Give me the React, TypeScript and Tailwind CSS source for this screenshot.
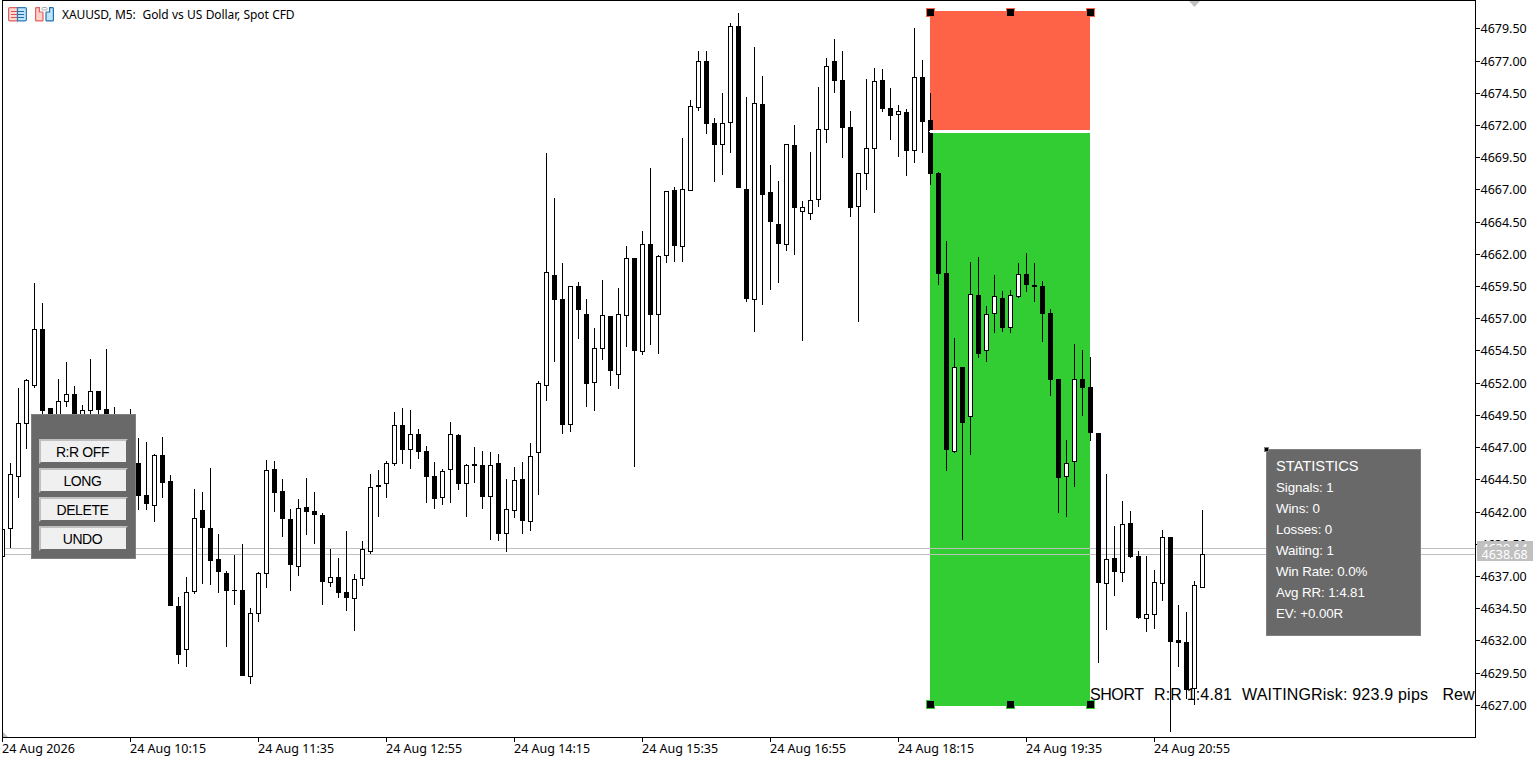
import React from 'react';

type Candle = [x: number, high: number, top: number, bottom: number, low: number, bull: 0 | 1];

// x, high, body top, body bottom, low, bullish
const CANDLES: Candle[] = [
    [2, 529, 529, 556, 556, 1], [10, 463, 474, 528, 547, 1], [18, 388, 423, 476, 497, 1], [26, 379, 380, 423, 448, 1],
    [34, 283, 329, 385, 387, 1], [42, 303, 329, 410, 416, 0], [50, 408, 408, 420, 420, 0], [58, 379, 401, 420, 420, 1],
    [66, 362, 394, 401, 406, 1], [74, 386, 394, 420, 420, 0], [82, 405, 410, 420, 420, 1], [90, 359, 391, 410, 416, 1],
    [98, 391, 391, 409, 420, 0], [106, 349, 409, 420, 420, 0], [114, 407, 420, 430, 430, 0], [130, 409, 420, 430, 430, 0],
    [138, 438, 463, 495, 509, 0], [146, 442, 495, 503, 509, 0], [154, 454, 455, 505, 521, 1], [162, 437, 455, 482, 497, 0],
    [170, 475, 481, 605, 605, 0], [178, 597, 606, 654, 663, 0], [186, 577, 592, 649, 666, 1], [194, 489, 518, 591, 593, 1],
    [202, 492, 510, 527, 583, 0], [210, 468, 528, 560, 584, 0], [218, 534, 559, 571, 592, 0], [226, 571, 573, 590, 646, 0],
    [234, 555, 590, 590, 604, 0], [242, 544, 590, 675, 675, 0], [250, 608, 613, 676, 683, 1], [258, 572, 573, 613, 621, 1],
    [266, 460, 470, 573, 587, 1], [274, 461, 469, 492, 511, 0], [282, 479, 491, 518, 536, 0], [290, 509, 519, 564, 590, 0],
    [298, 499, 508, 566, 575, 1], [306, 478, 507, 511, 534, 0], [314, 492, 511, 514, 543, 0], [322, 513, 515, 581, 604, 0],
    [330, 549, 577, 582, 586, 1], [338, 558, 577, 592, 597, 0], [346, 531, 592, 597, 610, 0], [354, 574, 579, 598, 630, 1],
    [362, 541, 549, 578, 585, 1], [370, 474, 487, 551, 553, 1], [378, 470, 485, 486, 516, 0], [386, 461, 463, 483, 497, 1],
    [394, 412, 425, 463, 465, 1], [402, 408, 425, 449, 463, 0], [410, 410, 434, 449, 468, 1], [418, 429, 434, 451, 458, 0],
    [426, 446, 451, 476, 502, 0], [434, 462, 476, 498, 508, 0], [442, 469, 471, 497, 504, 1], [450, 422, 434, 469, 502, 1],
    [458, 434, 435, 483, 489, 0], [466, 464, 465, 483, 516, 1], [474, 447, 464, 465, 482, 0], [482, 451, 465, 496, 508, 0],
    [490, 452, 465, 496, 539, 1], [498, 454, 463, 533, 540, 0], [506, 479, 509, 533, 551, 1], [514, 467, 480, 510, 517, 1],
    [522, 462, 479, 520, 533, 0], [530, 443, 456, 521, 530, 1], [538, 381, 383, 452, 494, 1], [546, 153, 272, 385, 400, 1],
    [554, 198, 275, 299, 361, 0], [562, 263, 299, 424, 433, 0], [570, 286, 286, 424, 431, 1], [578, 282, 286, 309, 338, 0],
    [586, 299, 314, 383, 406, 0], [594, 328, 348, 382, 410, 1], [602, 280, 315, 348, 359, 1], [610, 316, 316, 370, 385, 0],
    [618, 288, 314, 374, 388, 1], [626, 246, 258, 315, 346, 1], [634, 258, 258, 350, 466, 0], [642, 231, 244, 351, 354, 1],
    [650, 168, 244, 314, 344, 0], [658, 255, 256, 314, 353, 1], [666, 191, 191, 255, 262, 1], [674, 187, 190, 245, 261, 0],
    [682, 138, 189, 246, 261, 1], [690, 100, 106, 190, 190, 1], [698, 51, 61, 107, 110, 1], [706, 51, 61, 123, 133, 0],
    [714, 118, 123, 144, 181, 0], [722, 93, 123, 144, 174, 1], [730, 23, 26, 122, 152, 1], [738, 13, 26, 187, 187, 0],
    [746, 97, 189, 298, 301, 0], [754, 47, 103, 299, 331, 1], [762, 76, 104, 194, 304, 0], [770, 165, 192, 221, 289, 0],
    [778, 181, 224, 243, 282, 0], [786, 144, 144, 244, 250, 1], [794, 125, 145, 207, 254, 0], [802, 201, 207, 211, 340, 1],
    [810, 152, 200, 213, 219, 1], [818, 87, 129, 199, 206, 1], [826, 58, 66, 129, 142, 1], [834, 39, 61, 80, 92, 0],
    [842, 51, 80, 127, 157, 0], [850, 111, 127, 207, 216, 0], [858, 173, 173, 206, 321, 1], [866, 79, 148, 173, 189, 1],
    [874, 68, 81, 148, 212, 1], [882, 69, 80, 108, 111, 0], [890, 88, 108, 115, 139, 0], [898, 105, 111, 114, 156, 1],
    [906, 109, 112, 150, 175, 0], [914, 28, 77, 150, 162, 1], [922, 60, 77, 121, 152, 0], [930, 93, 120, 173, 184, 0],
    [938, 172, 173, 273, 284, 0], [946, 241, 273, 449, 470, 0], [954, 338, 367, 451, 452, 1], [962, 367, 367, 422, 539, 0],
    [970, 262, 294, 416, 454, 1], [978, 257, 295, 353, 357, 0], [986, 306, 314, 350, 361, 1], [994, 275, 296, 313, 332, 1],
    [1002, 291, 298, 327, 331, 0], [1010, 290, 295, 327, 332, 1], [1018, 263, 274, 296, 297, 1], [1026, 253, 274, 284, 291, 0],
    [1034, 263, 285, 286, 301, 0], [1042, 281, 286, 313, 341, 0], [1050, 309, 313, 379, 395, 0], [1058, 379, 379, 477, 512, 0],
    [1066, 440, 463, 476, 516, 1], [1074, 344, 379, 461, 486, 1], [1082, 350, 379, 387, 415, 0], [1090, 357, 387, 432, 440, 0],
    [1098, 433, 433, 582, 662, 0], [1106, 474, 559, 583, 629, 1], [1114, 526, 558, 571, 595, 0], [1122, 501, 524, 572, 581, 1],
    [1130, 511, 523, 556, 557, 0], [1138, 551, 556, 617, 618, 0], [1146, 556, 614, 618, 631, 1], [1154, 570, 582, 614, 628, 1],
    [1162, 530, 537, 583, 600, 1], [1170, 537, 537, 641, 731, 0], [1178, 605, 640, 642, 666, 0], [1186, 612, 642, 689, 698, 0],
    [1194, 581, 585, 688, 704, 1], [1202, 510, 554, 587, 587, 1],
];

const PRICE_TICKS = [28, 61, 93, 125, 157, 189, 222, 254, 286, 318, 350, 383, 415, 447, 479, 512, 544, 576, 608, 640, 673, 705];

const TIME_TICKS = [
    '24 Aug 2026', '24 Aug 10:15', '24 Aug 11:35', '24 Aug 12:55', '24 Aug 14:15',
    '24 Aug 15:35', '24 Aug 16:55', '24 Aug 18:15', '24 Aug 19:35', '24 Aug 20:55',
];

const STATS = ['Signals: 1', 'Wins: 0', 'Losses: 0', 'Waiting: 1', 'Win Rate: 0.0%', 'Avg RR: 1:4.81', 'EV: +0.00R'];

const BUTTONS = ['R:R OFF', 'LONG', 'DELETE', 'UNDO'];

const Handle: React.FC<{ x: number; y: number; color: string }> = ({ x, y, color }) => (
    <g>
        <rect x={x - 4} y={y - 4} width={9} height={9} fill={color} />
        <rect x={x - 3} y={y - 3} width={7} height={7} fill="#000" />
    </g>
);

const Chart = () => (
    <svg width={1476} height={738} shapeRendering="crispEdges" className="block shrink-0">
        <rect x={930} y={11} width={160} height={119} fill="#ff6347" />
        <rect x={930} y={133} width={160} height={573} fill="#32cd32" />
        <rect x={3} y={548} width={1472} height={1} fill="#c0c0c0" />
        <rect x={3} y={554} width={1472} height={1} fill="#c0c0c0" />

        {CANDLES.map(([x, high, top, bottom, low, bull]) => (
            <g key={x}>
                <rect x={x} y={high} width={1} height={low - high + 1} fill="#000" />
                <rect x={x - 2} y={top} width={5} height={bottom - top + 1} fill="#000" />
                {bull === 1 && <rect x={x - 1} y={top + 1} width={3} height={bottom - top - 1} fill="#fff" />}
            </g>
        ))}
        <rect x={930} y={130} width={160} height={3} fill="#fff" />
        <rect x={929} y={131} width={1} height={1} fill="#fff" />
        <rect x={0} y={500} width={2} height={80} fill="#fff" />

        <g className="font-['Liberation_Sans',Arial,sans-serif] text-[16px]" fill="#000">
            <text x={1090} y={700} textLength={54}>SHORT</text>
            <text x={1154} y={700} textLength={78}>R:R 1:4.81</text>
            <text x={1242} y={700} textLength={69}>WAITING</text>
            <text x={1311} y={700} textLength={117}>Risk: 923.9 pips</text>
            <text x={1442.5} y={700}>Rew</text>
        </g>

        {[930, 1010, 1090].map((x) => (
            <g key={x}>
                <Handle x={x} y={12} color="#ff6347" />
                <Handle x={x} y={704} color="#32cd32" />
            </g>
        ))}
        <path d="M1189 1h11l-5.5 6z" fill="#c0c0c0" shapeRendering="auto" />
        <path d="M3 732v5h5z" fill="#c0c0c0" shapeRendering="auto" />

        {/* frame */}
        <path d="M2 0h1474v738H2zM3 1v736h1472V1z" fill="#000" fillRule="evenodd" />
    </svg>
);

const PriceAxis = () => (
    <div className="relative w-[62px] pt-7 flex flex-col font-['Noto_Sans',sans-serif] text-[12.5px] leading-4">
        {PRICE_TICKS.map((y, i) => (
            <div key={y} className="flex items-start" style={{ height: (PRICE_TICKS[i + 1] ?? y + 16) - y }}>
                <span className="w-1 h-px bg-black" />
                <span className="ml-[0.5px] -mt-[7px]">{(4679.5 - i * 2.5).toFixed(2)}</span>
            </div>
        ))}
        {/* ask and bid tags */}
        <div className="absolute left-px top-[541px] w-14 flex flex-col text-white">
            <div className="h-[6px] overflow-hidden bg-[#c0c0c0] pl-[4.5px]">
                <div>4639.14</div>
            </div>
            <div className="h-[14px] bg-[#c0c0c0] pl-[4.5px]">4638.68</div>
        </div>
    </div>
);

const TimeAxis = () => (
    <div className="flex pl-0.5 font-['Noto_Sans',sans-serif] text-[12.5px] leading-4">
        {TIME_TICKS.map((label) => (
            <div key={label} className="w-32 shrink-0 flex items-start">
                <span className="w-px h-1 bg-black" />
                <span className="-ml-px mt-[3px] whitespace-nowrap">{label}</span>
            </div>
        ))}
    </div>
);

const DepthIcon = () => (
    <svg width={19} height={15} viewBox="0 0 19 15" fill="none">
        <path d="M9.5 .6H2Q.6 .6 .6 2v10.500Q.6 13.900 2 13.900h7.500z" fill="#fdd9d5" stroke="#e2625b" strokeWidth={1.2} />
        <path d="M9.5 .6H17q1.400 0 1.400 1.400v10.500q0 1.400-1.400 1.400H9.500z" fill="#bfe3fa" stroke="#2f7cb5" strokeWidth={1.2} />
        <path d="M3 4.500h6M3 7.500h6M3 10.500h6" stroke="#e2504a" />
        <path d="M10 4.500h6M10 7.500h6M10 10.500h6" stroke="#1f6ea9" />
    </svg>
);

const TradeIcon = () => (
    <svg width={19} height={15} viewBox="0 0 19 15" fill="none">
        <path d="M.6 1.400Q.6 .6 1.400 .6H4.400V5H7.200Q8 5 8 5.800V13q0 .9-.9.900H1.500q-.9 0-.9-.9z" fill="#fdd0cb" stroke="#e2625b" strokeWidth={1.2} />
        <path d="M18.400 1.400q0-.8-.8-.8H14.600V5H11.800Q11 5 11 5.800V13q0 .9.900.900h5.600q.9 0 .9-.9z" fill="#bfe3fa" stroke="#2371ab" strokeWidth={1.2} />
        <rect x={7} y={0.5} width={5} height={2.5} rx={0.8} fill="#fff" stroke="#a8a8a8" />
    </svg>
);

const App = () => {
    return (
        <div className="relative w-[1538px] h-[761px] bg-white overflow-hidden flex flex-col text-black">
            <div className="flex">
                <Chart />
                <PriceAxis />
            </div>
            <TimeAxis />

            <div className="absolute left-2 top-[7px] flex items-center h-[15px] gap-2">
                <DepthIcon />
                <TradeIcon />
                <span className="whitespace-pre font-['Noto_Sans',sans-serif] text-[12px] leading-[15px] tracking-[-0.1px] [word-spacing:0.4px]">
                    {'XAUUSD, M5:  Gold vs US Dollar, Spot CFD'}
                </span>
            </div>

            <div className="absolute left-[31px] top-[414px] w-[105px] h-[145px] bg-[#696969] border border-[#808080] pl-[7px] pt-6 flex flex-col gap-1">
                {BUTTONS.map((label) => (
                    <button
                        key={label}
                        className="w-[89px] h-[25px] bg-[#f0f0f0] border-2 border-t-[#c0c0c0] border-l-[#c0c0c0] border-r-[#696969] border-b-[#696969] pt-px pr-0.5 flex items-center justify-center font-['Liberation_Sans',Arial,sans-serif] text-[14px] tracking-[-0.4px] leading-none"
                    >
                        {label}
                    </button>
                ))}
            </div>

            <div className="absolute left-[1266px] top-[449px] w-[155px] h-[187px] bg-[#696969] border border-[#808080] pl-[9px] pt-[5px] text-white font-['Liberation_Sans',Arial,sans-serif]">
                <div className="absolute -left-[3px] -top-[3px] w-[5px] h-[5px] bg-black border border-[#808080]" />
                <h2 className="text-[14.67px] leading-[22px]">STATISTICS</h2>
                {STATS.map((line) => (
                    <p key={line} className="text-[13.33px] tracking-[-0.1px] leading-[21px]">{line}</p>
                ))}
            </div>
        </div>
    );
};

export default App;
